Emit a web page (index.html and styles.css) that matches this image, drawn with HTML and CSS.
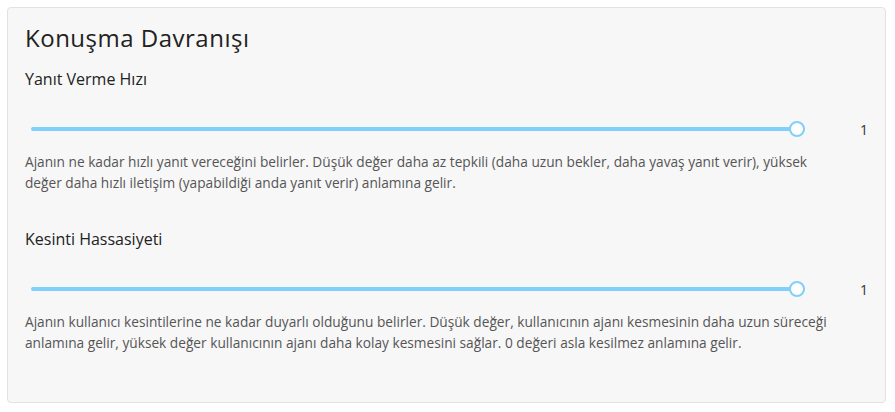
FILE: index.html
```html
<!DOCTYPE html>
<html lang="tr">
<head>
    <meta charset="UTF-8">
    <meta name="viewport" content="width=device-width, initial-scale=1.0">
    <title>Konuşma Davranışı</title>
    <link rel="stylesheet" href="styles.css">
</head>
<body>
    <div class="card">
        <h2 class="card-title">Konuşma Davranışı</h2>

        <!-- Yanıt hızı -->
        <div class="setting">
            <label class="setting-label" for="speed">Yanıt Verme Hızı</label>
            <div class="slider-row">
                <input type="range" id="speed" class="slider" min="0" max="1" step="0.1" value="1">
                <span class="slider-value">1</span>
            </div>
            <p class="setting-help">Ajanın ne kadar hızlı yanıt vereceğini belirler. Düşük değer daha az tepkili (daha uzun bekler, daha yavaş yanıt verir), yüksek değer daha hızlı iletişim (yapabildiği anda yanıt verir) anlamına gelir.</p>
        </div>

        <!-- Kesinti hassasiyeti -->
        <div class="setting">
            <label class="setting-label" for="interrupt">Kesinti Hassasiyeti</label>
            <div class="slider-row">
                <input type="range" id="interrupt" class="slider" min="0" max="1" step="0.1" value="1">
                <span class="slider-value">1</span>
            </div>
            <p class="setting-help">Ajanın kullanıcı kesintilerine ne kadar duyarlı olduğunu belirler. Düşük değer, kullanıcının ajanı kesmesinin daha uzun süreceği anlamına gelir, yüksek değer kullanıcının ajanı daha kolay kesmesini sağlar. 0 değeri asla kesilmez anlamına gelir.</p>
        </div>
    </div>
</body>
</html>
```

FILE: styles.css
```css
body {
    font-family: 'Open Sans', sans-serif;
    background: #fff;
    margin: 0;
    padding: 7px 9px 9px 7px;
    color: #222;
}

/* Kart */
.card {
    background-color: #f7f7f7;
    border: 1px solid #e2e2e2;
    border-radius: 4px;
    padding: 15px 17px 40px 17px;
    height: 396px;
    box-sizing: border-box;
}

.card-title {
    font-size: 24px;
    font-weight: 400;
    letter-spacing: 0.5px;
    margin: 0 0 15px 0;
    color: #222;
    line-height: 30px;
}

.setting {
    margin-bottom: 35px;
}

.setting-label {
    display: block;
    font-size: 16px;
    line-height: 22px;
    color: #222;
}

/* Slider satırı */
.slider-row {
    display: flex;
    align-items: center;
    margin-top: 29px;
    height: 20px;
}

.slider {
    -webkit-appearance: none;
    appearance: none;
    flex: 1;
    margin: 0 0 0 6px;
    height: 4px;
    border-radius: 2px;
    background: #81cffb;
    outline: none;
}

.slider::-webkit-slider-thumb {
    -webkit-appearance: none;
    width: 16px;
    height: 16px;
    border-radius: 50%;
    background: #fff;
    border: 2px solid #81cffb;
    box-sizing: border-box;
}

.slider-value {
    width: 63px;
    text-align: right;
    padding-right: 0;
    box-sizing: border-box;
    font-size: 14px;
    color: #333;
}

.setting-help {
    font-size: 13.7px;
    line-height: 21px;
    color: #555;
    margin: 12px 0 0 0;
    padding-right: 30px;
}
```
